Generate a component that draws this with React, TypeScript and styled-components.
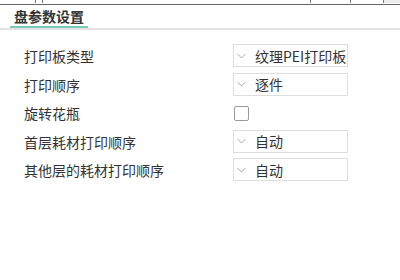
import { Fragment } from "react";
import styled, { createGlobalStyle } from "styled-components";

const Global = createGlobalStyle`
  html, body {
    margin: 0;
    background: #fff;
    font-family: "Noto Sans CJK SC", "Noto Sans", sans-serif;
    color: #333;
  }
`;

const TableStrip = styled.div`
  height: 4px;
  overflow: hidden;
  border-bottom: 1px solid #666;
`;

const TableRow = styled.div`
  display: flex;
  height: 18px;
  margin-top: -15px;
`;

const Cell = styled.div<{ $w?: number; $grey?: boolean; $center?: boolean }>`
  ${(p) => (p.$w ? `width: ${p.$w}px;` : "flex: 1;")}
  flex-shrink: 0;
  border-right: 1px solid #777;
  background: ${(p) => (p.$grey ? "#ececec" : "#fff")};
  font-family: "Liberation Sans", sans-serif;
  font-size: 15px;
  line-height: 16px;
  color: #222;
  padding-left: ${(p) => (p.$center ? 0 : 6)}px;
  text-align: ${(p) => (p.$center ? "center" : "left")};
  box-sizing: border-box;
  white-space: nowrap;
  &:last-child {
    border-right: none;
  }
`;

const TabBar = styled.div`
  display: flex;
  padding: 2px 0 0 10px;
  border-bottom: 2px solid #e2e2e2;
`;

const Tab = styled.div`
  width: 78px;
  box-sizing: border-box;
  padding-left: 4px;
  font-size: 14px;
  font-weight: 700;
  line-height: 19px;
  color: #333;
  border-bottom: 2px solid #7cc9b5;
`;

const Form = styled.div`
  display: grid;
  grid-template-columns: 209px 115px;
  grid-auto-rows: 24px;
  row-gap: 4.5px;
  margin-top: 14px;
  padding-left: 24px;
`;

const Label = styled.div`
  display: flex;
  align-items: center;
  font-size: 14px;
  color: #333;
`;

const Select = styled.div`
  display: flex;
  align-items: center;
  height: 23px;
  box-sizing: border-box;
  border: 1px solid #dedede;
  padding-left: 3px;
  font-size: 14px;
  color: #333;
  white-space: nowrap;
  overflow: hidden;
`;

const Chevron = styled.svg`
  width: 9px;
  height: 6px;
  margin-right: 9px;
  flex-shrink: 0;
`;

const CheckCell = styled.div`
  display: flex;
  align-items: center;
  padding-left: 1px;
`;

const CheckBox = styled.div`
  width: 15px;
  height: 15px;
  box-sizing: border-box;
  border: 1px solid #9a9a9a;
  border-radius: 2px;
  background: #fff;
`;

function Dropdown({ value }: { value: string }) {
  return (
    <Select>
      <Chevron viewBox="0 0 9 6">
        <polyline points="0.5,1 4.5,5 8.5,1" fill="none" stroke="#aaa" strokeWidth="1" />
      </Chevron>
      {value}
    </Select>
  );
}

const rows: { label: string; value?: string }[] = [
  { label: "打印板类型", value: "纹理PEI打印板" },
  { label: "打印顺序", value: "逐件" },
  { label: "旋转花瓶" },
  { label: "首层耗材打印顺序", value: "自动" },
  { label: "其他层的耗材打印顺序", value: "自动" },
];

export default function App() {
  return (
    <>
      <Global />
      <TableStrip>
        <TableRow>
          <Cell $w={36} />
          <Cell $w={7} />
          <Cell>vectorize3VG-3301-3308-03</Cell>
          <Cell $w={40} $center>
            2
          </Cell>
          <Cell $w={33} />
          <Cell $w={16} $grey />
        </TableRow>
      </TableStrip>
      <TabBar>
        <Tab>盘参数设置</Tab>
      </TabBar>
      <Form>
        {rows.map((r) => (
          <Fragment key={r.label}>
            <Label>{r.label}</Label>
            {r.value ? (
              <Dropdown value={r.value} />
            ) : (
              <CheckCell>
                <CheckBox />
              </CheckCell>
            )}
          </Fragment>
        ))}
      </Form>
    </>
  );
}
